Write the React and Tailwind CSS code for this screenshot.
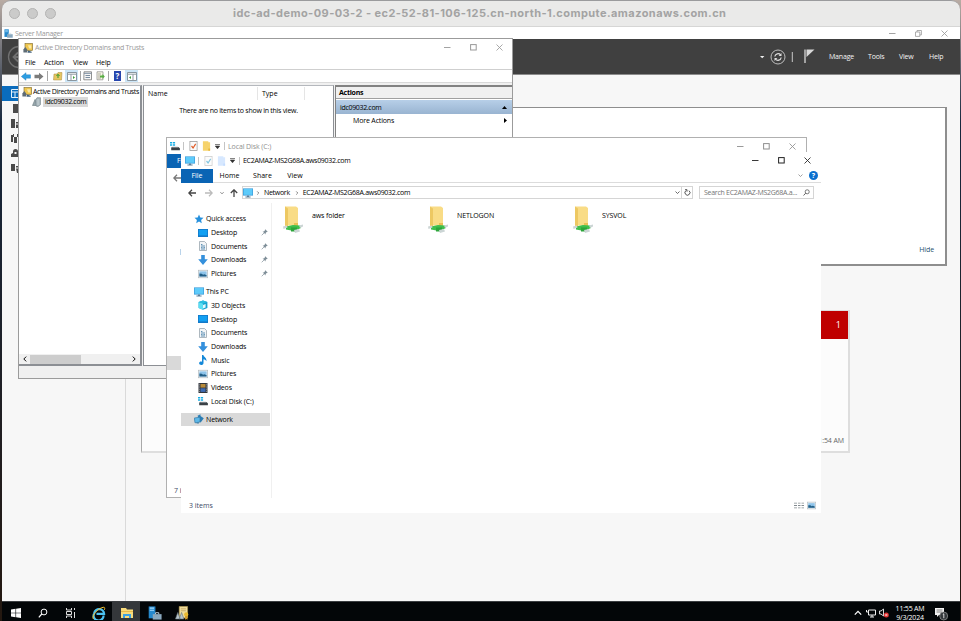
import clsx from 'clsx';

const MinimizeIcon = () => (
  <svg className="h-[7px] w-[7px]" viewBox="0 0 7 7" aria-hidden="true">
    <path d="M0 3.5h6.5" stroke="currentColor" strokeWidth="0.9" />
  </svg>
);

const MaximizeIcon = () => (
  <svg className="h-[7px] w-[7px]" viewBox="0 0 7 7" aria-hidden="true">
    <rect x="0.6" y="0.6" width="5.6" height="5.4" fill="none" stroke="currentColor" strokeWidth="1" />
  </svg>
);

const RestoreIcon = () => (
  <svg className="h-[7px] w-[7px]" viewBox="0 0 7 7" aria-hidden="true">
    <path d="M.5 2h4.3v4.4H.5zM2 2V.5h4.4v4.4H4.8" fill="none" stroke="currentColor" strokeWidth="0.8" />
  </svg>
);

const CloseIcon = () => (
  <svg className="h-[7px] w-[7px]" viewBox="0 0 7 7" aria-hidden="true">
    <path d="M.5.5l6 6M6.5.5l-6 6" stroke="currentColor" strokeWidth="0.85" />
  </svg>
);

const WindowControls = ({ className, restore = false }) => (
  <div className={clsx('ml-auto flex items-center gap-[19px]', className)}>
    <MinimizeIcon />
    {restore ? <RestoreIcon /> : <MaximizeIcon />}
    <CloseIcon />
  </div>
);

const svgProps = { viewBox: '0 0 10 10', 'aria-hidden': true };

const icons = {
  star: (
    <path d="M5 .5l1.3 2.9 3.2.3L7.1 6l.7 3.2L5 7.6 2.2 9.2 2.9 6 .5 3.7l3.2-.3z" fill="#2590dd" />
  ),
  desktop: (
    <>
      <rect x="0" y="1" width="10" height="8" fill="#1379c8" />
      <rect x="0.8" y="1.8" width="8.4" height="5.6" fill="#12a0f2" />
    </>
  ),
  documents: (
    <>
      <path d="M1.5.5h5l2 2v7h-7z" fill="#f2f5f7" stroke="#9aa7b0" strokeWidth="0.8" />
      <path d="M3 3.5h1.4M3 5h4M3 6.6h1.6M5.4 6.6H7M3 8h4" stroke="#4e87ad" strokeWidth="0.9" />
    </>
  ),
  downloads: <path d="M3.2 0h3.6v4.2h3L5 10 .2 4.200h3z" fill="#3490dc" />,
  pictures: (
    <>
      <rect x="0.3" y="1.2" width="9.4" height="7.6" fill="#eef3f6" stroke="#aab4ba" strokeWidth="0.6" />
      <rect x="1.4" y="2.4" width="7.2" height="5.1" fill="#8ec4ea" />
      <path d="M1.4 7.4V4.6l2.3.2 1.4 1 1.3-.6 2.2 1v1.2z" fill="#235f86" />
    </>
  ),
  pc: (
    <>
      <rect x="0" y="0.4" width="10" height="7.2" fill="#3c9ddb" />
      <rect x="0.7" y="1" width="8.6" height="5.8" fill="#5ecbfa" />
      <path d="M4 7.6h2v.900h1.6v.9H2.4v-.9H4z" fill="#5b7f99" />
    </>
  ),
  objects: (
    <>
      <path d="M.6 2L5 .4 9.4 2v6L5 9.8.6 8z" fill="#17a2cf" />
      <path d="M.6 2L5 3.4v6.4L.6 8z" fill="#5bdff3" />
      <path d="M5 5l2.6-1v3.4L5 8.4z" fill="#e4f8fc" />
      <path d="M.6 2L5 .4 9.4 2 5 3.4z" fill="#2bbfe0" />
    </>
  ),
  music: (
    <path d="M4 0h1.400C5.700 2 9 2.600 8.400 6.300c-.5-1.200-1.500-1.800-2.900-2v3.600c0 2.700-4.300 2.700-4.400.4C1.100 6.700 2.800 6.200 4 6.700z" fill="#1588d8" />
  ),
  videos: (
    <>
      <rect x="0.5" y="0" width="9" height="10" fill="#33373d" />
      <path d="M1.3.8v8.400M8.7.8v8.400" stroke="#a9adb2" strokeWidth="0.8" strokeDasharray="1 0.8" />
      <rect x="2.5" y="1" width="5" height="3.6" fill="#b88b3b" />
      <rect x="2.5" y="5.3" width="5" height="3.6" fill="#3c6bb4" />
    </>
  ),
  disk: (
    <>
      <path d="M0 1.700h2.200M2.900 1.700h2.200M0 4h2.200M2.900 4h2.200" stroke="#17aee6" strokeWidth="1.400" />
      <path d="M1.800 6h6.400L9.900 7.200v2H1.200V7z" fill="#3a4146" />
      <path d="M2.200 6.200h5.800" stroke="#a6b0b5" strokeWidth="0.8" />
    </>
  ),
  network: (
    <>
      <path d="M3.500 1.800L6.500.200v1.800l3.300 2.300-3.300 4.400z" fill="#2d7fb5" />
      <path d="M.3 4L6 3.200v4.800L1 8.800z" fill="#5db8e8" stroke="#3378a5" strokeWidth="0.7" />
      <path d="M2.600 8.500l2.300-.3v1.400H2.600z" fill="#3b7fa8" />
    </>
  ),
  checkDoc: (
    <>
      <rect x="1" y="0.5" width="8" height="9" fill="#fbfbfb" stroke="#9b9b9b" strokeWidth="0.8" />
      <path d="M2.8 5l1.700 2L7.400 2.800" fill="none" stroke="#e05a25" strokeWidth="1.3" />
    </>
  ),
  folder: (
    <>
      <path d="M1 .3h6v1h2v8.400H1z" fill="#f6d36c" />
      <path d="M7 7.500h2v2.200H7z" fill="#e6b73c" />
    </>
  ),
  adDomains: (
    <>
      <rect x="2" y="0.5" width="7.6" height="7" fill="#eec64f" stroke="#7d682b" strokeWidth="0.6" />
      <path d="M5 2.300h3.300v3.200H6.200" fill="#fbe9a4" />
      <path d="M.4 9.600V6.400L2.300 4l1.900 2.400v3.200z" fill="#5e6c76" />
      <path d="M5 7.500l3.700 1.200v1H4.500z" fill="#42617c" />
    </>
  ),
  // certificate with a pair of server towers, as pinned on the taskbar
  adTaskbar: (
    <>
      <path d="M3 .3h6v8.200H3z" fill="#efdc9c" stroke="#b89a4c" strokeWidth="0.4" />
      <path d="M4.200 2h3.600M4.200 3.400h3.600" stroke="#b79a58" strokeWidth="0.5" />
      <circle cx="8" cy="6" r="1.500" fill="#e9b92f" />
      <path d="M7.200 7.200h1.700v2.600l-.8-.6-.9.6z" fill="#d39a26" />
      <path d="M.3 9.300L2 4.600l1.700 4.700zM3 9.300l1.700-4.700 1.700 4.700z" fill="#b8c4ca" stroke="#5f6d75" strokeWidth="0.4" />
    </>
  ),
  domain: (
    <>
      <path d="M.5 8.500L3 2.500 5.500 8.500z" fill="#96a6ac" stroke="#69787e" strokeWidth="0.6" />
      <path d="M3.500 3L5 .7h3.500v7L6 9.600 4 9z" fill="#a7b5bb" stroke="#75858c" strokeWidth="0.6" />
      <path d="M5.200 3h2M5.200 5h2M5.200 7h2" stroke="#e0e8eb" strokeWidth="0.7" />
    </>
  ),
  server: (
    <>
      <path d="M.5.3h4.800v8.500H.5z" fill="#2689cd" />
      <path d="M1.300 1.500h3M1.300 3h3" stroke="#a9dcfb" strokeWidth="0.8" />
      <path d="M3.400 5.800h6.300v3.900H3.400z" fill="#8aa9bf" />
      <path d="M5.400 5.800v-1h2.300v1" fill="none" stroke="#c5d5df" strokeWidth="0.7" />
    </>
  ),
  pin: (
    <>
      <path d="M6 .4L9.600 4l-.8.4-.7-.1-1.500 1.500-.1 1.900-4.200-4.200 1.900-.1L5.700 1.900 5.600 1.200z" fill="#7e8e98" />
      <path d="M4.300 5.700L1 9" stroke="#7e8e98" strokeWidth="1" />
    </>
  ),
  views: (
    <path d="M0 1.500h3M0 5h3M0 8.500h3M4 1.500h2.500M4 5h2.500M4 8.500h2.500M7.500 1.500H10M7.500 5H10M7.500 8.500H10" stroke="#838b90" strokeWidth="1.1" />
  ),
  search: (
    <>
      <circle cx="6" cy="4" r="2.9" fill="none" stroke="currentColor" strokeWidth="1" />
      <path d="M3.800 6L.8 9.300" stroke="currentColor" strokeWidth="1.200" />
    </>
  ),
};

const Icon = ({ name, className = 'h-[10px] w-[10px]' }) => (
  <svg {...svgProps} preserveAspectRatio="none" className={clsx('shrink-0', className)}>
    {icons[name]}
  </svg>
);

const Chevron = ({ className, d = 'M1 3l4 4 4-4' }) => (
  <svg {...svgProps} className={clsx('shrink-0', className)}>
    <path d={d} fill="none" stroke="currentColor" strokeWidth="1.6" />
  </svg>
);

const MacTitleBar = () => (
  <div className="flex h-[27px] shrink-0 items-center rounded-t-[9px] border-t border-b border-t-[#9a9b9d] border-b-[#d6d6d5] bg-[#eaeae9] pl-[7px]">
    <div className="flex w-[224px] gap-[7px]">
      <span className="h-[11px] w-[11px] rounded-full border border-[#b4b4b3] bg-[#cbcbca]" />
      <span className="h-[11px] w-[11px] rounded-full border border-[#b4b4b3] bg-[#cbcbca]" />
      <span className="h-[11px] w-[11px] rounded-full border border-[#b4b4b3] bg-[#cbcbca]" />
    </div>
    <span className="font-[Inter] text-[11px] font-bold tracking-[0.44px] whitespace-nowrap text-[#a3a3a3]">
      idc-ad-demo-09-03-2 - ec2-52-81-106-125.cn-north-1.compute.amazonaws.com.cn
    </span>
  </div>
);

const ServerManagerHeader = () => (
  <div className="flex h-[36px] shrink-0 items-center border-b border-[#8c8c8c] bg-[#404040] text-[#f4f4f4]">
    <svg className="ml-[5px] h-[24px] w-[24px]" viewBox="0 0 24 24" aria-hidden="true">
      <circle cx="12" cy="12" r="10.5" fill="none" stroke="#707070" strokeWidth="1.3" />
      <path d="M18 12H7M11 7.500L6.500 12l4.500 4.500" fill="none" stroke="#707070" strokeWidth="1.8" />
    </svg>
    <svg className="ml-[729px] h-[18px] w-[56px]" viewBox="0 0 56 18" aria-hidden="true">
      <path d="M0 8h4.400L2.200 10.300z" fill="#eee" />
      <circle cx="18" cy="9" r="7" fill="none" stroke="#bdbdbd" strokeWidth="1" />
      <path d="M14.800 8.500a3.300 3.300 0 015.800-1.600M21.200 9.500a3.300 3.300 0 01-5.800 1.600" fill="none" stroke="#ddd" strokeWidth="1.2" />
      <path d="M21.500 5v2.900h-2.900zM14.500 13v-2.900h2.900z" fill="#ddd" />
      <path d="M32.300 4v10" stroke="#c8c8c8" strokeWidth="1" />
      <path d="M45 1.500V15" stroke="#d8d8d8" strokeWidth="1.3" />
      <path d="M46.500 1.500h8L46.500 9z" fill="#d8d8d8" />
    </svg>
    <nav className="ml-[13px] flex text-[7px] leading-[9px] tracking-[-0.18px]">
      <span className="w-[39px]">Manage</span>
      <span className="w-[31px]">Tools</span>
      <span className="w-[30px]">View</span>
      <span>Help</span>
    </nav>
  </div>
);

const sidebarGlyphs = [
  'M3 1h5v9H3z',
  'M1 1h4v9H1zM6 4h4v1.500H6zM6 6.500h4V10H6z',
  'M1 2h2v7H1zM4 4h3v6H4zM8 2h2v7H8zM3 1h1v3H3zM7 1h1v3H7z',
  'M3 5V3.500a2.500 2.500 0 015 0V5h2v4H1V6zM4.500 4v2h2V4z',
  'M1 1h4v7H1zM6 3h4v1.500H6zM6 5.500h4V10H7z',
];

const ServerManagerBody = () => (
  <div className="flex min-h-0 flex-1 bg-[#f7f7f7]">
    <aside className="w-[124px] shrink-0 border-r border-[#dadada] pt-[11px]">
      <div className="flex h-[15px] items-center bg-[#0a6cbd] pl-[9px]">
        <svg className="h-[9px] w-[11px]" viewBox="0 0 11 9" aria-hidden="true">
          <path d="M.5.500h10v8H.5zM.5 3h10M4 3v5.500M7.500 3v5.500" fill="none" stroke="#e5f2fb" />
        </svg>
      </div>
      <div className="flex flex-col gap-[5px] pt-[2px] pl-[8px]">
        {sidebarGlyphs.map((d) => (
          <svg key={d} className="h-[10px] w-[10px]" viewBox="0 0 10 10" aria-hidden="true">
            <path d={d} fill="#4a4a4a" />
          </svg>
        ))}
      </div>
    </aside>
    <main className="flex flex-1 flex-col pt-[32px] pl-[15px]">
      <section className="flex h-[159px] w-[806px] items-end justify-end border-2 border-t-[1.5px] border-[#8e8e8e] bg-white pr-[11px] pb-[10px]">
        <span className="text-[7px] leading-[9px] tracking-[-0.1px] text-[#24506e]">Hide</span>
      </section>
      <section className="mt-[44px] flex h-[143px] w-[709px] flex-col items-end border border-r-2 border-b-2 border-[#dedede] border-l-[#a9a9a9] bg-[#fcfcfc]">
        <div className="flex h-[28px] w-[60px] items-center justify-end bg-[#bf0000] pr-[7px] text-[9px] text-white">
          1
        </div>
        <span className="mt-auto pr-[4px] pb-[6px] text-[7px] leading-[9px] tracking-[-0.1px] text-[#666]">
          11:54 AM
        </span>
      </section>
    </main>
  </div>
);

const TaskbarSlot = ({ active = false, children }) => (
  <div className={clsx('flex h-full w-[27.6px] items-center justify-center', active && 'bg-[#34373a]')}>
    <div className="pt-[2px]">{children}</div>
  </div>
);

const Taskbar = () => (
  <div className="flex h-[20px] shrink-0 items-center border-t border-[#3b3e41] bg-[#030608] text-white">
    <TaskbarSlot>
      <svg className="h-[10px] w-[10px]" viewBox="0 0 10 10" aria-hidden="true">
        <path d="M0 1.400L4.500.8v3.900H0zM5.100.7L10 0v4.700H5.100zM0 5.300h4.500v3.900L0 8.600zM5.100 5.300H10V10l-4.900-.7z" fill="#fff" />
      </svg>
    </TaskbarSlot>
    <TaskbarSlot>
      <Icon name="search" className="h-[10px] w-[10px]" />
    </TaskbarSlot>
    <TaskbarSlot>
      <svg className="h-[10px] w-[10px]" viewBox="0 0 10 10" aria-hidden="true">
        <path d="M.5 0v2h5V0M.5 10V8h5v2M.5 3.500h5v3h-5zM8.500 0v2M8.500 4v6" fill="none" stroke="#ddd" />
      </svg>
    </TaskbarSlot>
    <TaskbarSlot>
      <svg className="ml-[1px] h-[14px] w-[14px]" viewBox="0 0 14 14" aria-hidden="true">
        <path d="M11.600 9.500A5 5 0 112.200 7.200a5 5 0 019.900.6H4.500" fill="none" stroke="#4cc2f2" strokeWidth="2.2" />
        <path d="M1.400 13C-1 10 6 2.200 11.200 1.300c1.700-.3 1.800.9 1.200 2.500" fill="none" stroke="#f3c230" strokeWidth="1" />
      </svg>
    </TaskbarSlot>
    <TaskbarSlot active>
      <svg className="ml-[1px] h-[12px] w-[14px]" viewBox="0 0 14 12" aria-hidden="true">
        <path d="M1 1h5l1 1.500h6V11H1z" fill="#f8db7c" />
        <path d="M1 4h12v1H1z" fill="#e6b94a" />
        <path d="M3 11V7h8v4H9V9H5v2z" fill="#3ba1e4" />
      </svg>
    </TaskbarSlot>
    <TaskbarSlot>
      <Icon name="server" className="ml-[2px] h-[14px] w-[14px]" />
    </TaskbarSlot>
    <TaskbarSlot>
      <Icon name="adTaskbar" className="ml-[1px] h-[14px] w-[14px]" />
    </TaskbarSlot>
    <div className="ml-auto flex h-full items-center pt-[3px] pr-[11px]">
      <Chevron className="mr-[4px] h-[8px] w-[8px]" d="M1 7l4-4 4 4" />
      <svg className="mr-[3px] h-[9px] w-[10px]" viewBox="0 0 10 9" aria-hidden="true">
        <path d="M2.500 1h7v5h-7zM4 8h4M6 6v2M.5 1v2h2" fill="none" stroke="#eee" />
      </svg>
      <svg className="mr-[6px] h-[10px] w-[10px]" viewBox="0 0 10 10" aria-hidden="true">
        <path d="M.5 3h1.500L4.500 1v7L2 6H.5z" fill="none" stroke="#eee" strokeWidth="0.9" />
        <circle cx="7.3" cy="7" r="2.5" fill="#e23434" />
        <path d="M6.300 6l2 2M8.300 6l-2 2" stroke="#fff" strokeWidth="0.6" />
      </svg>
      <div className="flex w-[30px] flex-col items-center text-[7px] leading-[9.5px] tracking-[-0.2px] whitespace-nowrap">
        <span>11:55 AM</span>
        <span>9/3/2024</span>
      </div>
      <svg className="mt-[1px] ml-[9px] h-[14px] w-[15px]" viewBox="0 0 15 14" aria-hidden="true">
        <path d="M1 1h9v7H5l-2 2V8H1z" fill="#f2f2f2" />
        <path d="M2.500 3h6M2.500 5h6" stroke="#666" strokeWidth="0.8" />
        <circle cx="9.7" cy="9" r="4" fill="#34383b" stroke="#999" strokeWidth="0.7" />
        <path d="M8.800 7.500l1-.7v4.400" fill="none" stroke="#fff" strokeWidth="0.8" />
      </svg>
    </div>
  </div>
);

const PaneButton = ({ className, mirrored = false }) => (
  <span className={clsx('flex h-[12px] w-[13px] items-center justify-center bg-[#cce6f8]', className)}>
    <svg className={clsx('h-[9px] w-[10px]', mirrored && '-scale-x-100')} viewBox="0 0 10 9" aria-hidden="true">
      <path d="M.5.500h9v8h-9z" fill="#fff" stroke="#7f8b94" strokeWidth="0.9" />
      <path d="M.5 2.200h9M4 2.200v6" stroke="#8f9aa2" />
      <path d="M6 4l2 1.500L6 7z" fill="#3b9d3b" />
    </svg>
  </span>
);

const Toolbar = () => (
  <div className="flex h-[13px] shrink-0 items-center border-b border-[#d9d9d9] pl-[2px]">
    <svg className="h-[9px] w-[24px]" viewBox="0 0 24 9" aria-hidden="true">
      <path d="M.3 4.500L5 .7v2.100h4.500v3.400H5v2.100z" fill="#2d9ee3" stroke="#1d79b8" strokeWidth="0.4" />
      <path d="M22.500 4.500L18 .7v2.100h-4.500v3.400H18v2.100z" fill="#7b7b7b" />
    </svg>
    <span className="mx-[2px] h-[10px] w-px bg-[#a5a5a5]" />
    <svg className="ml-[3px] h-[10px] w-[10px]" viewBox="0 0 10 10" aria-hidden="true">
      <path d="M1 3h3l1-1.500h4L8.500 9H.5z" fill="#e6c661" stroke="#a8883a" strokeWidth="0.5" />
      <path d="M5 7V4M3.500 5L5 3.200 6.500 5" fill="none" stroke="#35992d" />
    </svg>
    <PaneButton className="ml-[2px]" />
    <span className="ml-[2px] h-[10px] w-px bg-[#a5a5a5]" />
    <svg className="ml-[2px] h-[10px] w-[22px]" viewBox="0 0 22 10" aria-hidden="true">
      <path d="M1 .8h7.500v8H.8z" fill="#f5f5f5" stroke="#777" strokeWidth="0.8" />
      <path d="M1 2.300h7.500M2.500 4.500h4.500M2.500 6.500h4.500" stroke="#7b8da0" />
      <path d="M14 .8h6v8h-6z" fill="#fbf8e6" stroke="#888" strokeWidth="0.7" />
      <path d="M15 3h3M15 5h2M15 7h3" stroke="#888" strokeWidth="0.7" />
      <path d="M17 4.500h2.500V3l2.300 2.500L19.500 8V6.500H17z" fill="#58ad42" />
    </svg>
    <span className="ml-[3px] h-[10px] w-px bg-[#a5a5a5]" />
    <span className="ml-[5px] flex h-[10px] w-[7px] items-center justify-center bg-[#2746ad] text-[8px] leading-none font-bold text-white">
      ?
    </span>
    <PaneButton className="ml-[4px]" mirrored />
  </div>
);

const DomainsAndTrusts = () => (
  <div className="absolute top-[38px] left-[18px] flex h-[341px] w-[495px] flex-col border border-[#9b9b9b] bg-white text-[7px] leading-[9px] text-black">
    <div className="flex h-[17px] shrink-0 items-center pl-[4px] text-[#999]">
      <Icon name="adDomains" />
      <span className="ml-[2px] tracking-[-0.27px]">Active Directory Domains and Trusts</span>
      <WindowControls className="mr-[9px]" />
    </div>
    <nav className="flex h-[14px] shrink-0 items-center border-b border-[#cfcfcf] pl-[6px] tracking-[-0.1px]">
      <span className="w-[19px]">File</span>
      <span className="w-[29px]">Action</span>
      <span className="w-[23px]">View</span>
      <span>Help</span>
    </nav>
    <Toolbar />
    <div className="flex min-h-0 flex-1 gap-[1px] bg-[#f0f0f0] pt-[2px]">
      <div className="flex w-[123px] shrink-0 flex-col border-t border-r-2 border-b-2 border-[#8c8f94] border-t-[#b5b8bd] bg-white">
        <div className="flex h-[11px] items-center pl-[3px] whitespace-nowrap">
          <Icon name="adDomains" />
          <span className="ml-[1px] tracking-[-0.36px]">Active Directory Domains and Trusts</span>
        </div>
        <div className="flex h-[10px] items-center pl-[13px]">
          <Icon name="domain" />
          <span className="ml-[1px] bg-[#d9d9d9] pr-[2px] pl-[2px] leading-[10px] tracking-[-0.32px]">
            idc09032.com
          </span>
        </div>
        <div className="mt-auto flex h-[10px] items-center bg-[#f0f0f0] px-[3px]">
          <Chevron className="h-[6px] w-[6px]" d="M7 1L3 5l4 4" />
          <span className="ml-[2px] h-[9px] w-[51px] bg-[#cdcdcd]" />
          <Chevron className="ml-auto h-[6px] w-[6px]" d="M3 1l4 4-4 4" />
        </div>
      </div>
      <div className="flex w-[191px] shrink-0 flex-col border border-t-[#b5b8bd] border-[#8c8f94] bg-white">
        <div className="flex h-[15px] items-center pl-[4px]">
          <span className="w-[109px]">Name</span>
          <span className="h-[13px] border-l border-[#e5e5e5] pl-[4px] leading-[14px]">Type</span>
          <span className="ml-[26px] h-[13px] w-px bg-[#e5e5e5]" />
        </div>
        <p className="mt-[5px] text-center tracking-[-0.26px]">There are no items to show in this view.</p>
      </div>
      <div className="flex flex-1 flex-col border-t-2 border-l border-[#828282] bg-white">
        <div className="h-[12px] border-b border-[#a0a0a0] bg-[#f0f0f0] pl-[3px] leading-[12px] font-bold tracking-[-0.25px]">
          Actions
        </div>
        <div className="mt-px flex h-[14px] items-center justify-between bg-linear-to-b from-[#b7cfe8] to-[#99b4d1] pr-[5px] pl-[4px] tracking-[-0.32px]">
          idc09032.com
          <svg className="h-[3px] w-[5px]" viewBox="0 0 5 3" aria-hidden="true">
            <path d="M0 3L2.500 0 5 3z" />
          </svg>
        </div>
        <div className="flex h-[13px] items-center justify-between pr-[5px] pl-[17px] tracking-[-0.15px]">
          More Actions
          <svg className="h-[5px] w-[3px]" viewBox="0 0 3 5" aria-hidden="true">
            <path d="M0 0l3 2.500L0 5z" />
          </svg>
        </div>
      </div>
    </div>
    <div className="h-[12px] shrink-0 bg-[#f0f0f0]" />
  </div>
);

const DropCaret = () => (
  <svg className="h-[5px] w-[5px]" viewBox="0 0 5 5" aria-hidden="true">
    <path d="M0 .500h5M.3 2h4.400L2.500 4.800z" stroke="currentColor" strokeWidth="0.6" fill="currentColor" />
  </svg>
);

const QuickAccessBar = ({ icon, title, faded = false }) => (
  <>
    <Icon name={icon} />
    <span className="ml-[3px] h-[8px] w-px bg-[#c4c4c4]" />
    <div className={clsx('ml-[5px] flex items-center', faded && 'opacity-50 hue-rotate-180')}>
      <Icon name="checkDoc" className="h-[10px] w-[9px]" />
      <Icon name="folder" className="ml-[4px] h-[10px] w-[9px]" />
    </div>
    <span className="ml-[4px] text-[#333]">
      <DropCaret />
    </span>
    <span className="mr-[3px] ml-[4px] h-[8px] w-px bg-[#c4c4c4]" />
    <span className="tracking-[-0.3px] whitespace-nowrap">{title}</span>
  </>
);

const LocalDiskWindow = () => (
  <div className="absolute top-[137px] left-[166px] flex h-[361px] w-[641px] flex-col border border-[#b0b0b0] bg-white text-[7px] leading-[9px]">
    <div className="flex h-[16px] shrink-0 items-center pl-[3px] text-[#8f8f8f]">
      <QuickAccessBar icon="disk" title={<span className="tracking-[-0.1px]">Local Disk (C:)</span>} />
      <WindowControls className="mr-[10px]" />
    </div>
    <div className="h-[14px] w-[40px] bg-[#0a64b4] pl-[10px] leading-[14px] text-white">File</div>
    <Chevron className="mt-[6px] ml-[6px] h-[8px] w-[8px] text-[#777]" d="M5 1L1 5l4 4M1 5h9" />
    <div className="mt-[67px] h-[6px] w-[14px] border-r border-[#b9d3ea]" />
    <div className="mt-[101px] h-[14px] w-[60px] bg-[#d9d9d9]" />
    <div className="mt-auto pb-[2px] pl-[7px] text-[#3c4a66]">7 items</div>
  </div>
);

const quickAccess = [
  { icon: 'desktop', label: 'Desktop' },
  { icon: 'documents', label: 'Documents' },
  { icon: 'downloads', label: 'Downloads' },
  { icon: 'pictures', label: 'Pictures' },
];

const thisPc = [
  { icon: 'objects', label: '3D Objects' },
  { icon: 'desktop', label: 'Desktop' },
  { icon: 'documents', label: 'Documents' },
  { icon: 'downloads', label: 'Downloads' },
  { icon: 'music', label: 'Music' },
  { icon: 'pictures', label: 'Pictures' },
  { icon: 'videos', label: 'Videos' },
  { icon: 'disk', label: 'Local Disk (C:)' },
];

const NavItem = ({ icon, label, nested = false, pinned = false, selected = false }) => (
  <div
    className={clsx(
      'flex h-[13.7px] shrink-0 items-center pr-[2px]',
      nested ? 'pl-[17px]' : 'pl-[13px]',
      selected && 'bg-[#d9d9d9]',
    )}
  >
    <Icon name={icon} />
    <span className={clsx('tracking-[-0.14px]', nested ? 'ml-[3px]' : 'ml-[2px]')}>{label}</span>
    {pinned && <Icon name="pin" className="ml-auto h-[7px] w-[7px]" />}
  </div>
);

const SharedFolder = ({ name }) => (
  <div className="flex w-[145px]">
    <svg className="h-[29px] w-[22px]" viewBox="0 0 22 29" aria-hidden="true">
      <path d="M3 1.500h11l2 1.500v17.500H3z" fill="#f9dc86" />
      <path d="M3 1.500l3 2v19l-3-2z" fill="#edc862" />
      <path d="M12 18h4v3.500h-4z" fill="#e8bf55" />
      <path d="M4 21.500l7-1.500 7 .5 1 2.500-7 3-8-1.500z" fill="#3fbf4c" />
      <path d="M9 22.500h6v4H9z" fill="#2da53b" />
      <path d="M1 21.500l4-1 .5 2-4 1.500zM17 20.500l4-1v2l-3 1.500zM12 25l5-1 1 2.500-5 1.500z" fill="#ccd5d5" />
    </svg>
    <span className="mt-[6px] ml-[8px] tracking-[-0.1px]">{name}</span>
  </div>
);

const ExplorerWindow = () => (
  <div className="absolute top-[152px] left-[181px] flex h-[361px] w-[640px] flex-col bg-white text-[7px] leading-[9px] text-black">
    <div className="flex h-[17px] shrink-0 items-center pl-[4px]">
      <QuickAccessBar icon="pc" faded title="EC2AMAZ-MS2G68A.aws09032.com" />
      <WindowControls className="mr-[10px] text-[#222]" />
    </div>
    <div className="flex h-[14px] shrink-0 items-center border-b border-[#dcdcdc] pr-[3px]">
      <span className="flex h-[14px] w-[32px] items-center justify-center bg-[#0a64b4] text-white">File</span>
      <span className="w-[33px] text-center">Home</span>
      <span className="w-[33px] text-center">Share</span>
      <span className="w-[32px] text-center">View</span>
      <Chevron className="ml-auto h-[5px] w-[5px] text-[#888]" />
      <span className="ml-[6px] flex h-[9px] w-[9px] items-center justify-center rounded-full bg-[#0a6fce] text-[7px] leading-none font-bold text-white">
        ?
      </span>
    </div>
    <div className="flex h-[19px] shrink-0 items-center pl-[7px] text-[#444]">
      <Chevron className="h-[8px] w-[8px]" d="M5 1L1 5l4 4M1 5h9" />
      <Chevron className="ml-[9px] h-[8px] w-[8px] text-[#bbb]" d="M5 1l4 4-4 4M9 5H0" />
      <Chevron className="ml-[7px] h-[4px] w-[4px]" />
      <Chevron className="ml-[6px] h-[8px] w-[8px]" d="M1 5l4-4 4 4M5 1v9" />
      <div className="ml-[4px] flex h-[13px] w-[451px] items-center border border-[#d5d5d5]">
        <Icon name="pc" />
        <Chevron className="ml-[3px] h-[4px] w-[4px]" d="M3 1l4 4-4 4" />
        <span className="ml-[4px] tracking-[-0.3px] text-black">Network</span>
        <Chevron className="ml-[5px] h-[4px] w-[4px]" d="M3 1l4 4-4 4" />
        <span className="ml-[4px] tracking-[-0.3px] text-black">EC2AMAZ-MS2G68A.aws09032.com</span>
        <Chevron className="mr-[1px] ml-auto h-[5px] w-[5px]" />
        <span className="h-full w-px bg-[#d5d5d5]" />
        <svg className="mr-[1px] ml-[2px] h-[7px] w-[7px]" viewBox="0 0 7 7" aria-hidden="true">
          <path d="M2.200 1.500A2.500 2.500 0 105 1.700M1 .7h2v2" fill="none" stroke="currentColor" strokeWidth="0.9" />
        </svg>
      </div>
      <div className="ml-[6px] flex h-[13px] w-[115px] items-center border border-[#d5d5d5] pr-[3px] pl-[4px]">
        <span className="tracking-[-0.28px] whitespace-nowrap text-[#747474]">Search EC2AMAZ-MS2G68A.a...</span>
        <Icon name="search" className="ml-auto h-[7px] w-[7px]" />
      </div>
    </div>
    <div className="flex min-h-0 flex-1 pt-[1px]">
      <aside className="flex w-[91px] shrink-0 flex-col border-r border-[#f0f0f0] pt-[9px] pr-[1px]">
        <NavItem icon="star" label="Quick access" />
        {quickAccess.map((item) => (
          <NavItem key={item.label} {...item} nested pinned />
        ))}
        <div className="h-[4.5px] shrink-0" />
        <NavItem icon="pc" label="This PC" />
        {thisPc.map((item) => (
          <NavItem key={item.label} {...item} nested />
        ))}
        <div className="h-[4.5px] shrink-0" />
        <NavItem icon="network" label="Network" selected />
      </aside>
      <div className="flex pt-[2px] pl-[10px]">
        <SharedFolder name="aws folder" />
        <SharedFolder name="NETLOGON" />
        <SharedFolder name="SYSVOL" />
      </div>
    </div>
    <div className="flex h-[15px] shrink-0 items-center pr-[5px] pl-[8px] text-[#3c4a66]">
      3 items
      <Icon name="views" className="ml-auto h-[7px] w-[10px]" />
      <Icon name="pictures" className="ml-[3px] h-[9px] w-[9px]" />
    </div>
  </div>
);

const App = () => (
  <div className="relative h-[621px] w-[961px] overflow-hidden bg-linear-to-b from-[#b9aca4] via-[#16273d] via-20% to-[#241810] pr-px pl-[2px] font-['Open_Sans','Noto_Sans',sans-serif]">
    <div className="flex h-full flex-col">
      <MacTitleBar />
      <div className="flex h-[12px] shrink-0 items-center bg-white pl-[2px] text-[7px] leading-[9px] text-[#999]">
        <Icon name="server" className="h-[9px] w-[9px]" />
        <span className="ml-[2px] tracking-[-0.28px]">Server Manager</span>
        <WindowControls className="mr-[12px]" restore />
      </div>
      <ServerManagerHeader />
      <ServerManagerBody />
      <Taskbar />
    </div>
    <DomainsAndTrusts />
    <LocalDiskWindow />
    <ExplorerWindow />
  </div>
);

export default App;
